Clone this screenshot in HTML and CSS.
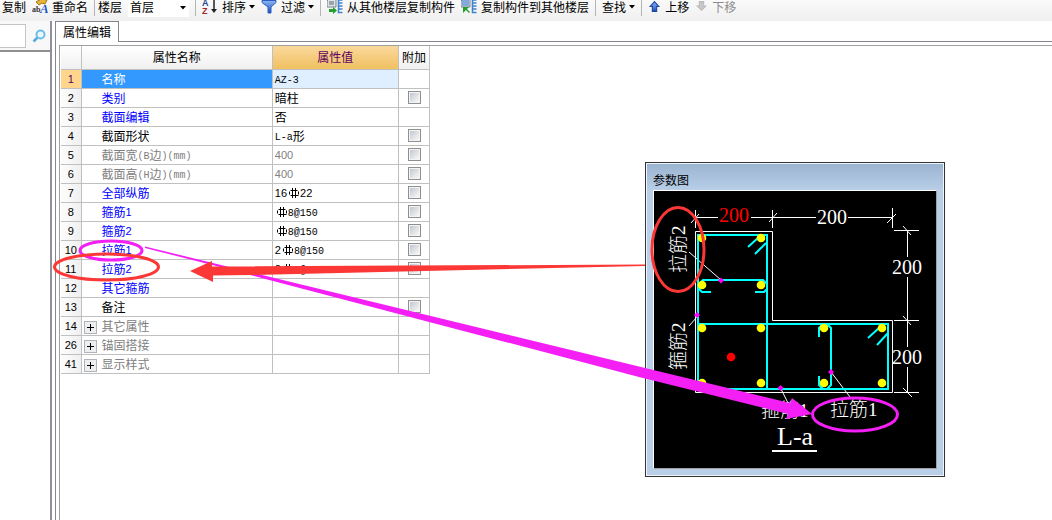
FILE: index.html
```html
<!DOCTYPE html>
<html lang="zh-CN">
<head>
<meta charset="utf-8">
<title>属性编辑</title>
<link rel="stylesheet" href="styles.css">
</head>
<body>
<svg class="defs" aria-hidden="true">
  <defs>
    <linearGradient id="blue" x1="0" y1="0" x2="0" y2="1"><stop offset="0" stop-color="#8db8f5"/><stop offset="1" stop-color="#1a4fc0"/></linearGradient>
    <symbol id="caret" viewBox="0 0 6 4"><path d="M0 0h6L3 3.5z" fill="#000"/></symbol>
    <symbol id="rebar" viewBox="0 0 12 12"><path d="M2.5 3.5h7M1.500 4.500v3M2.500 8.500h8M10.500 4.500v3M4.500 1v10M7.500 1v10" fill="none" stroke="#000"/></symbol>
    <symbol id="sheet" viewBox="0 0 16 16"><path d="M2 0h7v8H0V2z" fill="#dde3ea" stroke="#75808c"/><path d="M2 3h5M2 5h5" stroke="#58636e"/><path d="M15.500 1h-4v12.500h4M11.500 4h4M11.500 7h4M11.500 10h4" fill="none" stroke="#3f83cc" stroke-width="1.600"/></symbol>
  </defs>
</svg>

<header class="toolbar">
  <button class="tool">复制</button>
  <button class="tool">
    <svg class="icon" viewBox="0 0 16 16"><path d="M4 3l5-3 6 1-2 4-3-1-3 2z" fill="#e8b53c" stroke="#a87514"/><text x="0" y="13" class="ico-a">ab</text><text x="8" y="14" class="ico-b">A</text></svg>
    重命名</button>
  <i class="sep"></i>
  <label class="floor-label" for="floor">楼层</label>
  <span class="combo"><select id="floor"><option>首层</option></select><svg class="caret"><use href="#caret"/></svg></span>
  <i class="sep"></i>
  <button class="tool">
    <svg class="icon" viewBox="0 0 16 16"><text x="0" y="7" class="ico-az blue">A</text><text x="0" y="15" class="ico-az red">Z</text><path d="M12 1v11" stroke="#222" stroke-width="1.500"/><path d="M9 10h6l-3 4z" fill="#222"/></svg>
    排序<svg class="caret"><use href="#caret"/></svg></button>
  <button class="tool">
    <svg class="icon" viewBox="0 0 16 16"><path d="M1 1.500h14v2L10 8v6H7V8L1 3.500z" fill="url(#blue)" stroke="#2c5fbe"/></svg>
    过滤<svg class="caret"><use href="#caret"/></svg></button>
  <i class="sep"></i>
  <button class="tool">
    <svg class="icon" viewBox="0 0 16 16"><use href="#sheet"/><path d="M2 10h4V8l4 3.500L6 15v-2H2z" fill="#22a02f"/></svg>
    从其他楼层复制构件</button>
  <button class="tool">
    <svg class="icon" viewBox="0 0 16 16"><use href="#sheet"/><path d="M1 1h7v6H1z" fill="#84a9dd"/><path d="M2 8h6L6 10l3 3-1 1-3-3-3 3z" fill="#22a02f"/></svg>
    复制构件到其他楼层</button>
  <i class="sep"></i>
  <button class="tool">查找<svg class="caret"><use href="#caret"/></svg></button>
  <i class="sep"></i>
  <button class="tool">
    <svg class="arrow" viewBox="0 0 12 12"><path d="M6 1.500L10 6H8v4.500H4V6H2z" fill="url(#blue)" stroke="#1b459c"/></svg>
    上移</button>
  <button class="tool" disabled>
    <svg class="arrow" viewBox="0 0 12 12"><path d="M6 9.500L10 5.500H8v-4H4v4H2z" fill="#c8c8c8" stroke="#bbb"/></svg>
    下移</button>
</header>

<div class="workspace">
  <aside class="sidebar">
    <div class="search">
      <input type="text" aria-label="搜索">
      <button aria-label="搜索"><svg class="lens" viewBox="0 0 14 14"><path d="M5.500 8.500L1.500 12.500" stroke="#59a8de" stroke-width="2.500"/><circle cx="8.500" cy="5.500" r="4" fill="#eaf8ff" stroke="#6dbdec" stroke-width="2"/></svg></button>
    </div>
  </aside>
  <main class="editor">
    <div class="tabs"><button class="tab">属性编辑</button></div>
    <div class="pane">
      <table class="props">
        <colgroup><col class="c-no"><col class="c-name"><col class="c-value"><col class="c-add"></colgroup>
        <thead><tr><th></th><th>属性名称</th><th class="active">属性值</th><th>附加</th></tr></thead>
        <tbody>
          <tr class="selected"><th>1</th><td class="name">名称</td><td><span class="mono">AZ-3</span></td><td></td></tr>
          <tr><th>2</th><td class="name key">类别</td><td>暗柱</td><td><input type="checkbox" aria-label="类别"></td></tr>
          <tr><th>3</th><td class="name key">截面编辑</td><td>否</td><td></td></tr>
          <tr><th>4</th><td class="name">截面形状</td><td><span class="mono">L-a</span>形</td><td><input type="checkbox" aria-label="截面形状"></td></tr>
          <tr class="dim"><th>5</th><td class="name">截面宽<span class="mono">(B</span>边<span class="mono">)(mm)</span></td><td><span class="num">400</span></td><td><input type="checkbox" aria-label="截面宽"></td></tr>
          <tr class="dim"><th>6</th><td class="name">截面高<span class="mono">(H</span>边<span class="mono">)(mm)</span></td><td><span class="num">400</span></td><td><input type="checkbox" aria-label="截面高"></td></tr>
          <tr><th>7</th><td class="name key">全部纵筋</td><td><span class="num">16</span><svg class="rebar"><use href="#rebar"/></svg><span class="num">22</span></td><td><input type="checkbox" aria-label="全部纵筋"></td></tr>
          <tr><th>8</th><td class="name key">箍筋<span class="num">1</span></td><td><svg class="rebar"><use href="#rebar"/></svg><span class="mono">8@150</span></td><td><input type="checkbox" aria-label="箍筋1"></td></tr>
          <tr><th>9</th><td class="name key">箍筋<span class="num">2</span></td><td><svg class="rebar"><use href="#rebar"/></svg><span class="mono">8@150</span></td><td><input type="checkbox" aria-label="箍筋2"></td></tr>
          <tr><th>10</th><td class="name key">拉筋<span class="num">1</span></td><td><span class="num">2</span><svg class="rebar"><use href="#rebar"/></svg><span class="mono">8@150</span></td><td><input type="checkbox" aria-label="拉筋1"></td></tr>
          <tr><th>11</th><td class="name key">拉筋<span class="num">2</span></td><td><span class="num">2</span><svg class="rebar"><use href="#rebar"/></svg><span class="mono">8@150</span></td><td><input type="checkbox" aria-label="拉筋2"></td></tr>
          <tr><th>12</th><td class="name key">其它箍筋</td><td></td><td></td></tr>
          <tr><th>13</th><td class="name">备注</td><td></td><td><input type="checkbox" aria-label="备注"></td></tr>
          <tr class="dim"><th>14</th><td class="group"><button class="expand" aria-label="展开其它属性"></button>其它属性</td><td></td><td></td></tr>
          <tr class="dim"><th>26</th><td class="group"><button class="expand" aria-label="展开锚固搭接"></button>锚固搭接</td><td></td><td></td></tr>
          <tr class="dim"><th>41</th><td class="group"><button class="expand" aria-label="展开显示样式"></button>显示样式</td><td></td><td></td></tr>
        </tbody>
      </table>
    </div>
  </main>
</div>

<section class="window">
  <h2>参数图</h2>
  <svg class="cad" viewBox="654 191 282 277">
    <g class="line">
      <path d="M695.500 210v18M691 223l8-9M695 217.500h23M751 217.500h65M772.500 210v18M769 222l8-9M848 217.500h44M892.500 208v20M887 223l9-9"/>
      <path d="M894 230.500h25M903 226l8 9M907.500 230v27M907.500 277v70M894 320.500h25M903 316l8 9M907.500 367v25M894 392.500h25M903 388l9 9"/>
      <path d="M695.500 231.500h77v89h120v72h-197z"/>
      <path d="M689 252l32 28M689 326l8-9M781 389l8 16M831 372l19 25"/>
    </g>
    <g class="bar">
      <path d="M698 235h69v154h-69zM698 324h190v65H698z"/>
      <path d="M711 292h-9l-3-3v-5l4-4h60l4 4v5l-3 3h-9"/>
      <path d="M819 337v-9l4-4h4l4 4v57l-4 4h-4l-4-4v-9"/>
      <path d="M748 247l11-10M755 254l11-11M868 338l11-10M877 345l11-12"/>
    </g>
    <g fill="#ff0">
      <circle cx="702" cy="238" r="4.300"/><circle cx="761" cy="238" r="4.300"/><circle cx="702" cy="285" r="4.300"/><circle cx="761" cy="285" r="4.300"/>
      <circle cx="702" cy="328" r="4.300"/><circle cx="761" cy="328" r="4.300"/><circle cx="824" cy="328" r="4.300"/><circle cx="882" cy="328" r="4.300"/>
      <circle cx="702" cy="383" r="4.300"/><circle cx="761" cy="383" r="4.300"/><circle cx="824" cy="383" r="4.300"/><circle cx="882" cy="383" r="4.300"/>
    </g>
    <circle cx="731" cy="357" r="4.300" fill="#f00"/>
    <path d="M721 277.500l3 3-3 3-3-3zM697 312l3 3-3 3-3-3zM780.500 385l3 3-3 3-3-3zM831 369l3 3-3 3-3-3z" fill="#f0f"/>
    <g class="cad-text">
      <text x="719" y="222" class="red">200</text><text x="817" y="224">200</text><text x="892" y="274">200</text><text x="892" y="364">200</text>
      <text transform="translate(685 273) rotate(-90)" class="tag">拉筋2</text>
      <text transform="translate(685 370) rotate(-90)" class="tag">箍筋2</text>
      <text x="761" y="417" class="tag">箍筋1</text><text x="830" y="416" class="tag">拉筋1</text>
      <text x="777" y="445" class="caption">L-a</text>
    </g>
    <path d="M772 451h45" stroke="#fff" stroke-width="2"/>
  </svg>
</section>

<svg class="marks" width="1052" height="520" viewBox="0 0 1052 520" aria-hidden="true">
  <path d="M145 246.500L641 367 790 403 792 398 812 414 786 419 788 414 639 377 220 267 145 248z" fill="#f41ff4"/>
  <path d="M645 264.500L212 266.500V261L190 271 213 282V275.500L250 275 645 266z" fill="#fb3836"/>
  <g fill="none" stroke-width="3">
    <ellipse cx="111" cy="250.500" rx="31" ry="9.500" stroke="#f41ff4"/>
    <ellipse cx="855" cy="414.500" rx="42.500" ry="16.500" stroke="#f41ff4"/>
    <ellipse cx="106.500" cy="267" rx="52" ry="13" stroke="#fb3836"/>
    <ellipse cx="678" cy="249.500" rx="26" ry="42" stroke="#fb3836"/>
  </g>
</svg>
</body>
</html>
```
FILE: styles.css
```css
* { box-sizing: border-box; }
body {
  margin: 0;
  min-height: 100vh;
  display: flex;
  flex-direction: column;
  position: relative;
  overflow: hidden;
  background: #fff;
  color: #000;
  font: 12px/18px "Noto Sans CJK SC", sans-serif;
}
button, select, input { font: inherit; color: inherit; margin: 0; padding: 0; border: 0; background: none; }
.defs { position: absolute; width: 0; height: 0; }

.toolbar {
  display: flex;
  align-items: center;
  gap: 6px;
  height: 21px;
  padding: 0 2px 8px;
  background: linear-gradient(#fafafa, #efefef);
  white-space: nowrap;
}
.tool { display: flex; align-items: center; gap: 4px; flex: none; line-height: 12px; }
.tool:disabled { color: #8c8c8c; }
.tool .caret { margin-left: -1px; }
.icon { width: 16px; height: 16px; }
.arrow { width: 13px; height: 13px; }
.caret { width: 6px; height: 4px; }
.sep { flex: none; width: 1px; height: 18px; background: #b5b5b5; }
.floor-label { line-height: 12px; margin-left: -3px; }
.combo { position: relative; display: flex; width: 61px; height: 20px; background: #fff; flex: none; }
.combo select { appearance: none; width: 100%; padding-left: 2px; }
.combo .caret { position: absolute; right: 3px; top: 9px; }
.ico-a { font: bold 8px "Liberation Serif", serif; fill: #333; }
.ico-b { font: italic bold 13px "Liberation Serif", serif; fill: #2456c8; }
.ico-az { font: bold 9px "Liberation Sans", sans-serif; }
.ico-az.blue { fill: #24468c; }
.ico-az.red { fill: #a32a2a; }

.workspace { flex: 1; display: flex; }
.sidebar { width: 52px; border-right: 2px solid #8e9199; }
.search {
  display: flex;
  align-items: center;
  gap: 6px;
  height: 31px;
  border-bottom: 2px solid #909090;
  background: #f8f8f8;
}
.search input { width: 26px; height: 24px; background: #fff; border: 1px solid #c4c4c4; border-left: 0; }
.search button { display: flex; }
.lens { width: 14px; height: 14px; }

.editor { flex: 1; display: flex; flex-direction: column; margin-left: 3px; border-left: 1px solid #86868e; }
.tabs { display: flex; height: 21px; }
.tabs::after { content: ""; flex: 1; border-bottom: 1px solid #86868e; }
.tab { width: 63px; border: solid #86868e; border-width: 1px 1px 0 0; }
.pane { flex: 1; margin: 3px 0 0 3px; padding-left: 1px; border: solid #a0a0a0; border-width: 1px 0 0 1px; }

.props { width: 369px; table-layout: fixed; border-collapse: collapse; }
.c-no { width: 20px; }
.c-name { width: 191px; }
.c-value { width: 126px; }
.c-add { width: 31px; }
.props th, .props td { height: 19px; padding: 0 0 0 2px; border: 1px solid #c0c0c0; line-height: 18px; text-align: left; font-weight: normal; white-space: nowrap; }
.props tr > :first-child { border-left: 0; }
.props thead th { height: 23px; padding: 0; border-top: 0; text-align: center; background: linear-gradient(#fff, #f0f0f0); }
.props thead .active { background: linear-gradient(#fad89c, #f0c060); color: #600060; }
.props tbody th { padding: 0; text-align: center; background: linear-gradient(90deg, #fdfdfd, #efefef); font: 11px/18px "Liberation Sans", sans-serif; }
.props td.name { padding-left: 20px; }
.props .key { color: #00f; }
.props .dim td { color: #808080; }
.props .selected th { background: #ffd58d; color: #600060; }
.props .selected td:nth-child(2) { background: #3399ff; color: #fff; }
.props .selected td:nth-child(3) { background: #e0efff; }
.mono { font: 10px/12px "Liberation Mono", monospace; vertical-align: 1px; }
.num { font: 11px/12px "Liberation Sans", sans-serif; vertical-align: 1px; }
.rebar { width: 12px; height: 12px; margin-left: 1px; vertical-align: -1px; }

.props input {
  appearance: none;
  display: block;
  width: 13px;
  height: 13px;
  margin: 0 auto;
  border: 1px solid #8e8f8f;
  background: linear-gradient(135deg, #c2c7d0, #f8f8f8) content-box;
  padding: 1px;
  box-shadow: inset 0 0 0 1px #f4f4f4;
}
.props td.group { padding-left: 2px; }
.expand {
  width: 13px;
  height: 13px;
  margin-right: 5px;
  vertical-align: -2px;
  border: 1px solid #b0b4b8;
  background:
    linear-gradient(#000, #000) center / 7px 1px no-repeat,
    linear-gradient(#000, #000) center / 1px 7px no-repeat,
    #eceef0;
}

.window {
  position: absolute;
  left: 645px;
  top: 162px;
  width: 300px;
  padding: 0 7px 7px;
  border: 1px solid #333;
  box-shadow: inset 0 0 0 1px #eef6fc;
  background: linear-gradient(#9ab3d0, #b9cfe8 28px);
}
.window h2 { margin: 0; padding-top: 7px; height: 27px; font-size: 12px; line-height: 20px; font-weight: normal; }
.cad { display: block; width: 284px; border: 1px solid; border-color: #fff #a0a0a0 #a0a0a0 #fff; background: #000; }
.line { fill: none; stroke: #fff; stroke-width: 1; }
.bar { fill: none; stroke: #0ff; stroke-width: 2; }
.cad-text { font: 300 20px "Liberation Serif", "Noto Sans CJK SC", serif; fill: #fff; }
.cad-text .red { fill: #f00; }
.cad-text .tag { font-size: 19px; }
.cad-text .caption { font-size: 26px; }
.marks { position: absolute; left: 0; top: 0; pointer-events: none; }
```
